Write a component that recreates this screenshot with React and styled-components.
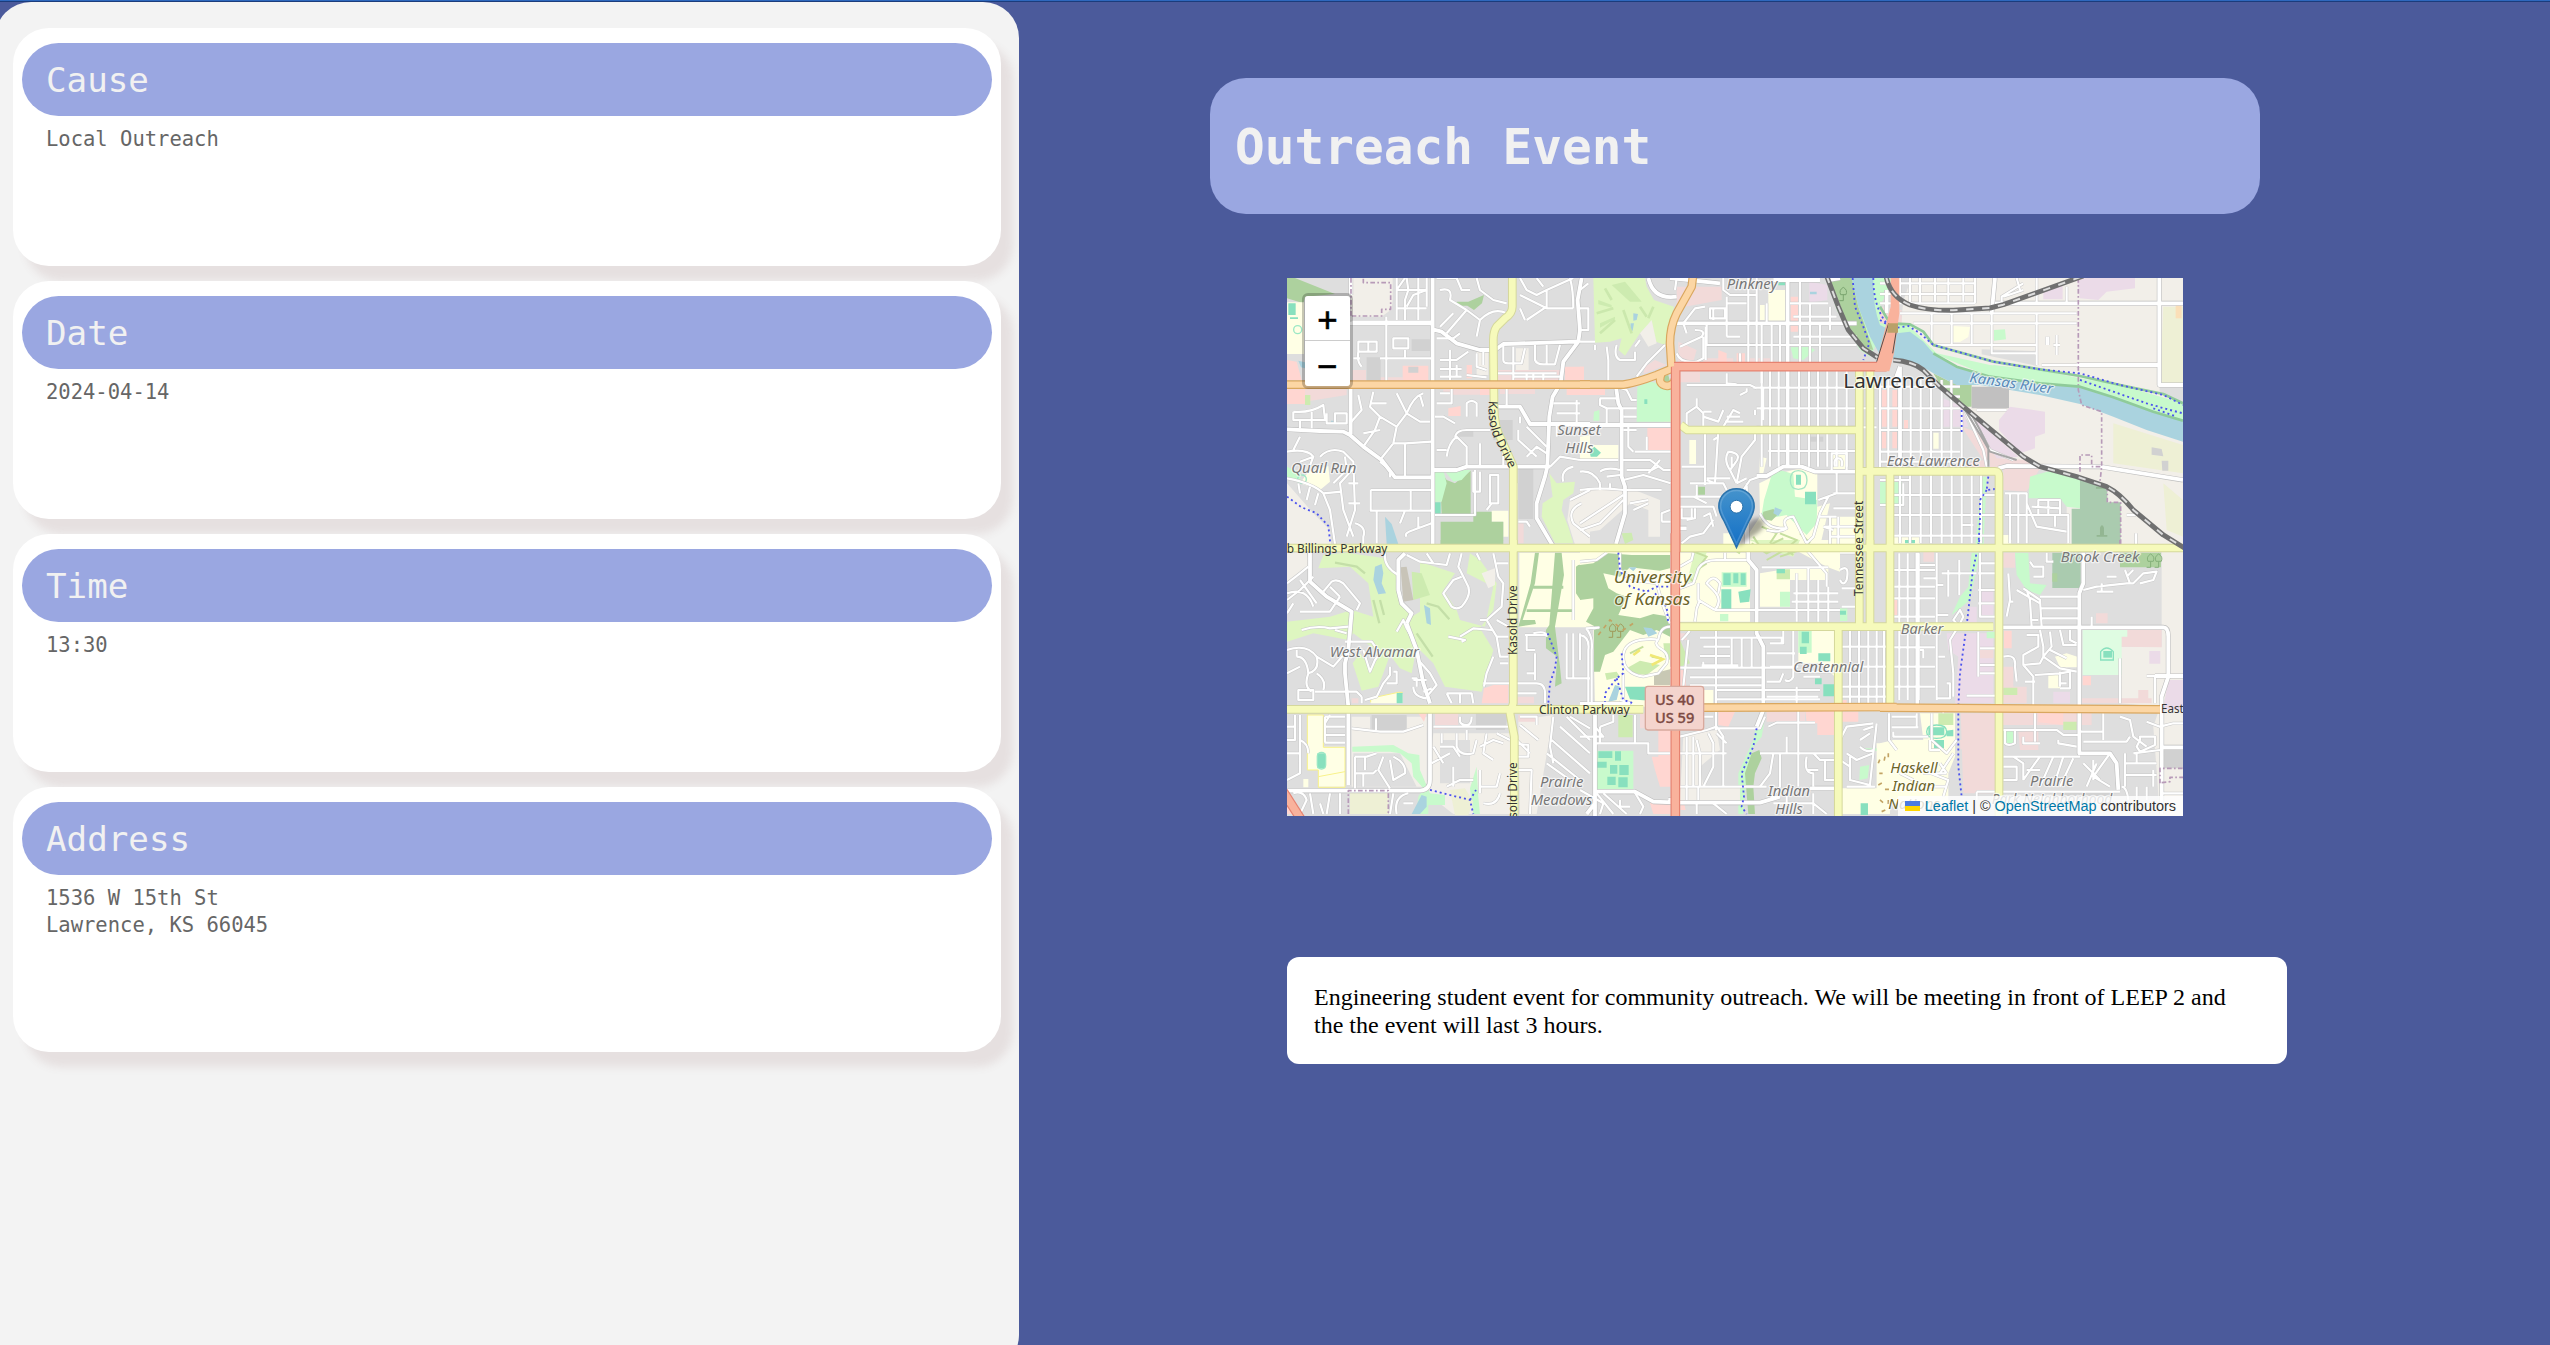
import React from "react";
import styled, { createGlobalStyle } from "styled-components";

const Global = createGlobalStyle`
  * { box-sizing: border-box; }
  body { margin: 0; background: #4b5a9b; overflow: hidden; }
`;

const mono = `"DejaVu Sans Mono", "Liberation Mono", monospace`;

const Page = styled.div`
  height: 1345px;
  overflow: hidden;
  background: #4b5a9b;
`;
const TopBar = styled.div`
  height: 2px;
  background: #2e68bd;
  border-bottom: 1px solid #1b3c7c;
`;
const Columns = styled.div`
  display: flex;
  align-items: flex-start;
`;
const Sidebar = styled.aside`
  width: 1024px;
  height: 1369px;
  margin-left: -5px;
  padding: 26px 18px;
  border-radius: 36px;
  background: #f3f3f3;
  overflow: hidden;
  flex: none;
  display: flex;
  flex-direction: column;
  gap: 15px;
`;
const Card = styled.section`
  height: ${(p) => (p.$lines > 1 ? 265 : 238)}px;
  padding: 15px 9px;
  border-radius: 36px;
  background: #fff;
  box-shadow: 12px 15px 9px #e6e0e0;
  flex: none;
`;
const CardTitle = styled.h2`
  margin: 0;
  height: 73px;
  padding-left: 24px;
  border-radius: 36.5px;
  background: #9aa7e1;
  color: #f1f1f1;
  font: 400 34.2px/74px ${mono};
`;
const CardBody = styled.div`
  padding: 10px 24px 0;
  color: #666;
  font: 20.5px/27px ${mono};
`;
const Main = styled.main`
  flex: 1;
  padding: 76px 0 0 191px;
  display: flex;
  flex-direction: column;
  align-items: flex-start;
`;
const Heading = styled.h1`
  margin: 0 0 64px;
  width: 1050px;
  height: 136px;
  padding: 0 25px;
  border-radius: 36px;
  background: #9aa7e1;
  color: #f1f1f1;
  font: 700 49.4px/138px ${mono};
`;
const MapFrame = styled.div`
  position: relative;
  width: 896px;
  height: 538px;
  margin-left: 77px;
  overflow: hidden;
  background: #dedede;
  > svg { display: block; }
`;
const ZoomControl = styled.div`
  position: absolute;
  top: 15px;
  left: 15px;
  border: 3px solid rgba(0, 0, 0, 0.22);
  border-radius: 6px;
  background-clip: padding-box;
`;
const ZoomButton = styled.button`
  display: block;
  width: 45px;
  height: 45px;
  padding: 4px 0 0;
  border: 0;
  border-bottom: ${(p) => (p.$first ? "1px solid #ccc" : "0")};
  border-radius: ${(p) => (p.$first ? "3px 3px 0 0" : "0 0 3px 3px")};
  background: #fff;
  color: #000;
  font: 400 33px/40px "DejaVu Sans Mono", monospace;
  -webkit-text-stroke: 0.5px #000;
`;
const Attribution = styled.div`
  position: absolute;
  right: 0;
  bottom: 0;
  height: 20px;
  padding: 0 7px;
  display: flex;
  align-items: center;
  white-space: pre;
  background: rgba(255, 255, 255, 0.8);
  color: #333;
  font: 14.45px/20px "Liberation Sans", Arial, sans-serif;
`;
const MapLink = styled.span`
  color: #0078a8;
`;
const Flag = styled.span`
  width: 15px;
  height: 10px;
  margin-right: 5px;
  background: linear-gradient(#4c7be1 50%, #ffd500 50%);
`;
const Description = styled.p`
  width: 1000px;
  height: 107px;
  margin: 141px 0 0 77px;
  padding: 26px 27px;
  border-radius: 12px;
  background: #fff;
  color: #000;
  font: 24.03px/28px "Liberation Serif", "Times New Roman", serif;
`;

/* The map is divided in six tiles, each drawn in thirds of a pixel. */
const ORIGIN = { A: [-7, -8], B: [293, -8], C: [593, -8], D: [-7, 262], E: [293, 262], F: [593, 262] };
const V = (xs, a, b) => xs.map((x) => `M${x} ${a}V${b}`).join("");
const H = (ys, a, b) => ys.map((y) => `M${a} ${y}H${b}`).join("");
const box = (x, y, w, h) => `M${x} ${y}h${w}v${h}h${-w}z`;

const C = {
  park: "#c8facc", wood: "#add19e", golf: "#def6c0", school: "#ffffe5", pitch: "#88e0be",
  retail: "#ffd6d1", shop: "#f2dad9", ind: "#ebdbe8", bare: "#f2efe9", water: "#aad3df",
  dark: "#d1d1d1", grass: "#cdebb0", farm: "#eef0d5", cem: "#aacbaf", grey: "#dedede", mint: "#dffce2",
};

const LAND = [
  ["C", C.bare, "M95 24H909V840H340L360 600L350 590L230 400L160 320L60 200L70 90Z"],
  ["C", C.grey, "M0 24H90L60 130L0 110ZM0 600H560V840H0ZM305 238l165 5v45h-165zM839 345h70v55l-70-30z"],
  ["F", C.bare, "M845 24H909V840H840L830 690L820 560L840 500L720 490V320H845Z"],
  ["F", C.grey, "M360 40H520V260H360Z"],
  ["A", C.wood, "M21 24H45L165 72L75 80L70 100L21 85Z"],
  ["A", C.school, "M21 97H72V252H21ZM85 605L145 588L150 635L120 660L60 640ZM635 722H685V800H670V755H635Z"],
  ["A", C.pitch, box(25, 100, 22, 35) + box(465, 697, 17, 34) + box(30, 142, 24, 5)],
  ["A", C.bare, "M213 24H338V90L335 118L305 140H213ZM590 240h35v75h-35zM708 235h38v65h-38zM21 640L100 730L150 780L155 840H21ZM870 690L930 665V840H890L862 750Z"],
  ["A", C.retail, "M21 270L50 275L65 330H21ZM368 287H445V332H368ZM21 358H75V402H21ZM855 290H912V330H855ZM560 285h16v40h-16zM860 355h65v20h-65zM505 415l37-7v30h-37zM600 355h50v20h-50z"],
  ["A", C.shop, "M75 358H200V375L75 395ZM218 300h40v32h-40zM300 322h70v12h-70zM650 300h200v34h-200zM490 358h110v16h-110zM660 358h105v14h-105zM715 760h16v60h-16z"],
  ["A", C.dark, box(395, 208, 55, 35) + box(260, 262, 42, 72) + box(640, 450, 58, 60) + box(715, 597, 45, 150) + box(385, 290, 30, 18) + box(530, 480, 50, 20)],
  ["A", C.wood, "M530 95H565L612 75L606 100L582 120L562 107H530ZM482 755H580V725H635V755H670V822H482ZM480 600L500 630L525 640L572 602V732H485Z"],
  ["A", C.park, "M464 600H490L500 640L485 695H464ZM492 600H572L545 630L520 635ZM21 590L62 610L60 640L21 625Z"],
  ["A", C.water, "M315 740L335 762L355 822H320ZM55 272l20 5v18l-12-3zM153 452h12v12h-12z"],
  ["A", C.golf, "M808 610L830 640L885 635L880 670L850 690L845 720L865 770L880 820H825L785 740L788 700L818 680Z"],
  ["A", C.school, "M900 500L930 495V570H900Z"],
  ["A", C.grass, box(75, 375, 16, 30)],

  ["B", C.golf, "M40 24H195L200 50L222 90L282 110L255 225L228 215L215 155L180 190L135 257L116 240L125 205L90 215L45 218Z"],
  ["B", C.grass, "M95 45L135 35L185 95L150 95ZM55 90l40 15v8l-40-10zM60 160l45-20v8l-45 25z"],
  ["B", C.bare, "M180 190L215 150L230 220L205 230ZM0 655H150L240 690V800H205V720L150 700L60 780L0 790Z"],
  ["B", C.shop, "M290 50H425V90L290 115ZM295 215L350 240L340 275H295ZM195 290L225 270L260 285L190 312ZM370 265h90v35h-90zM500 265h80v35h-80zM300 305h60v32h-60z"],
  ["B", C.retail, "M202 474H272V542H202ZM252 425h20v30h-20zM415 240l25 10v45h-60v-20h35zM470 250h25v40h-25zM632 80h22v105h-22zM0 290H12V345H0ZM0 355h75v20H0z"],
  ["B", C.park, "M172 350L210 335L272 345V455H170ZM632 232L690 230L705 240L670 270L640 265ZM42 425l16-5v32h-18z"],
  ["B", C.school, "M565 60H620V152H565ZM540 105h14v45h-14zM0 525h115v42H0zM328 510h20v72h-20zM540 560l20 5-10 45h-12zM752 550h50v48h-50z"],
  ["B", C.school, "M538 640L600 610L660 595L712 610V790L680 840H500V800L540 740ZM430 790h40v40h-40zM712 710l38-10-30 130h-40zM750 740h80v90h-80z"],
  ["B", C.ind, "M688 35L742 45V90L688 98Z"],
  ["B", C.park, "M575 615L600 600L640 612L645 680L712 690L710 760L680 795L645 760L620 735L570 745L545 735L552 690Z"],
  ["B", C.pitch, "M648 614h15v30h-15zM675 665h33v38h-33zM595 24h22v22h-22zM28 540l15-10 20 18-12 12H32zM193 388h9v14h-9z"],
  ["B", C.wood, "M550 725l30-8 15 15-20 20-30-5zM345 650h30v24h-30zM245 320l20-5 5 20h-20z"],
  ["B", C.water, "M585 712l22 8-12 18-15-8zM690 65h20v8h-20zM160 130l14 2-4 18-10 2zM152 160l10 0-4 22h-8z"],
  ["B", C.dark, box(690, 500, 40, 15)],
  ["B", C.grass, "M125 790L155 788L160 810L135 822Z"],

  ["C", C.park, "M-160 24H40L0 110L30 160L90 165L160 230L340 275L480 300L600 325L720 345L909 400V460L700 385L480 340L330 320L160 250L60 190L20 165L-30 260L-60 240L-130 120Z"],
  ["C", C.wood, "M-155 24H-85L-65 110L-20 240L-60 232L-100 180ZM160 310L220 340L275 345V410H245L190 360Z"],
  ["C", C.bare, "M90 170L130 180L160 222L340 260L480 290L480 300L330 285L170 250Z"],
  ["C", C.water, "M-85 24H-20Q-22 110 0 165L50 190L90 185L130 215L160 250L230 290L330 320L480 340L600 350L700 382L820 425L909 452V515L800 480L700 440L600 402L480 375L390 360L300 345H230L160 310L110 280L45 265L0 255L-30 200L-65 110Z"],
  ["C", "#c1c0c0", "M275 350H387V415H275Z"],
  ["C", C.ind, "M390 410L495 425V490L465 500V535L420 550L357 480V450ZM590 24H765V55L680 65L655 90L600 85ZM490 60L548 40V88H490ZM190 385L245 410L265 470H190ZM265 430l70 60 80 70-90 10z"],
  ["C", C.shop, "M245 470L300 490L350 565L440 570L480 595L440 665L370 660V600H265V580L310 570ZM0 110L65 120V160H0Z"],
  ["C", C.retail, box(5, 360, 16, 110) + box(37, 360, 16, 110) + box(5, 485, 14, 50) + box(37, 485, 14, 50) + box(72, 450, 12, 30)],
  ["C", C.park, "M450 620L520 600L600 630V715L560 710L540 685L445 685ZM342 180L375 178L378 208L342 212ZM0 636H65V705H0ZM305 620l15 0-10 220h-25zM340 285l130 15 125 30-10 20-115-20-130-20z"],
  ["C", C.cem, "M600 628L682 650V697H722V822H575V716H600Z"],
  ["C", C.farm, "M700 460L909 525V610L700 580ZM850 110H909V345H840ZM850 640L909 690V800L860 780Z"],
  ["C", "#fbdfb8", box(887, 105, 18, 40)],
  ["C", C.school, "M220 168l50 3-5 30-25 15h-20zM160 488h16v48h-16zM368 795h25v28h-25zM40 800h80v22H40z"],
  ["C", C.dark, "M815 532l30 5 5 22-35-5zM845 572l20 0v30h-18z"],

  ["D", C.golf, "M130 45L200 38L315 55L350 110L365 190L395 230L420 215V65L525 100L490 150L530 210L540 240L615 260L640 140L560 100L570 40L600 60L650 130L640 210L600 265L640 330L605 455L495 440L460 370L410 320L395 400L360 385L330 345L295 440L245 452L218 370L240 340L275 390L300 340L220 280L205 300L100 280L21 305V245L150 230L215 210L280 230L265 130L210 80L115 85Z"],
  ["D", C.grass, "M395 95L425 100L450 165L400 180Z"],
  ["D", "#c8c4b8", "M362 82L380 80L400 180L370 185Z"],
  ["D", C.water, "M285 80L305 72L310 100L305 130L318 160L295 163L280 120ZM432 195L450 205L453 255L440 250Z"],
  ["D", C.bare, "M21 38H80L90 80L40 120L21 125ZM605 100l40-15v50l-20 10zM215 530H440V740H215ZM460 580H690V822H520L440 760ZM715 540L820 525L770 822H720Z"],
  ["D", C.grey, box(270, 525, 110, 45) + "M220 640H360L410 740H220ZM560 520H685V570H560ZM480 600h90v130h-90z"],
  ["D", C.dark, "M275 525h105v45H275zM588 520h97l-10 50h-87z"],
  ["D", C.school, "M272 475L355 457L368 462V490H272ZM82 525H130V620H195V740H115V690H82ZM718 38H930V262H718ZM70 717h15v25H70z"],
  ["D", C.wood, "M765 38H777L765 130L728 240L765 240L768 252L715 260L752 130ZM825 38H845L852 105L825 260L840 380L845 430L825 440L832 350L798 325L798 270L808 255ZM895 75L930 70V182L900 178L888 160V80ZM760 137h90v9h-90zM740 208h140v8h-140zM482 0h190l-60 12H482z"],
  ["D", C.retail, "M605 490L612 445L650 432L685 430V490ZM415 520h25l-8 25zM21 780L55 822H21Z"],
  ["D", C.shop, "M465 520H535V562L465 568ZM715 525h58l-5 20-53 0zM215 475h20v15h-20zM712 470h50v20h-50z"],
  ["D", C.park, "M217 620L340 615L385 640L418 645L420 690L450 760L495 765V795H445V822H410L415 770L430 745L400 710L395 670L360 640L330 635H217ZM590 680L570 745L580 822H600L595 770Z"],
  ["D", C.water, "M425 765L440 770L440 800L420 822H395Z"],
  ["D", C.pitch, "M350 458h18v32h-18zM112 640h24v45h-24z"],
  ["D", C.farm, "M210 755H325V822H210ZM510 750l45-5 25 40-15 40h-40z"],

  ["E", C.school, "M0 30H270V500H45L40 260H0ZM300 38H510V245H300ZM540 100L630 85H745V120H630V200H540ZM655 265H765V410L720 370H655ZM635 24L500 0H780V95L740 80ZM890 610H930V822H785V745H890ZM370 450h30v40h-30z"],
  ["E", C.wood, "M0 75L40 70L85 40L155 45H270V85L240 92L150 82L120 110L70 100L85 145L110 160L140 170L115 225L180 235L220 222L270 230V290L230 270L190 285L150 270L100 335L75 345L60 395H42V258L18 245L40 205V175L0 180Z"],
  ["E", C.grass, "M115 525H158V592H115ZM140 385L180 362L240 375L200 405L160 400ZM250 310H270V360L255 350ZM300 300L330 370L300 380ZM590 88h40v30h-40zM75 400l35-5 10 15-40 10z"],
  ["E", C.golf, "M345 30L385 24L350 120L320 130ZM510 0h150l-20 50-60-15z"],
  ["E", C.park, "M425 97H500V140H425ZM420 222h25v22h-25zM655 268h40v70h-40zM48 632H160V748H45ZM555 535L545 590L520 620L500 700L490 822H475V700L520 600L530 545ZM780 205h22v38h-22zM840 680l28-5-5 40-25 5zM855 625h35v8h-35zM600 155h30v45h-30z"],
  ["E", C.pitch, "M424 148h30v60h-30zM475 155L512 148L508 185L480 188ZM135 440H210V482L150 478ZM665 275h22v35h-22zM660 320h20v22h-20zM715 340h36v24h-36zM730 433h33v36h-33zM705 415h20v18h-20zM55 634h42v20H55zM105 634h18v28h-18zM50 665h30v18H50zM90 675h22v26H90zM118 675h28v30h-28zM82 710h25v25H82zM115 712h28v30h-28zM780 212h18v12h-18zM842 790h22v35h-22zM430 100h22v35h-22zM460 100h15v30h-15zM482 100h15v35h-15zM590 85h25v15h-25z"],
  ["E", C.water, "M190 262L215 265L232 280L205 290ZM105 435L120 440L110 480L85 485ZM145 82l25 0-10 12z"],
  ["E", "#c8c8b4", "M222 400L270 388V435H222Z"],
  ["E", C.wood, "M538 630L545 655L525 700L520 740L525 822H505L495 700L515 640Z"],
  ["E", C.retail, "M235 570L272 520V740H240L225 690L215 650L235 650ZM415 515h50l-20 45-30-5zM675 500H765V585H712V550H680ZM780 500h20v-20h-20zM785 515h50v30h-50zM210 790L270 780V822H220ZM302 390h16v50h-16zM302 740v70h15z"],
  ["E", C.shop, "M180 520h90v45h-90zM300 280h20v20h-20zM560 515h115v30H560z"],
  ["E", C.bare, "M310 585L410 570L420 630L360 680L370 740H480V780H300Z"],

  ["F", C.ind, "M200 280H340V490H225L235 350L205 330ZM300 150h40v75h-40zM520 455h50v35h-50zM808 333h33v38h-33zM865 420h44v90h-60zM270 200l20 0v60h-30z"],
  ["F", C.shop, "M242 520H350V760H250ZM370 380H400V440H440V490H365ZM722 265H845V322L722 320ZM605 475h210v15H605zM130 35h32v30h-32zM370 38h35v45h-35zM300 330h40v25h-40zM415 575l60-5v60h-55zM775 450h30v35h-30zM365 515h270v40H365zM648 220h35v30h-35z"],
  ["F", C.retail, "M372 272H395V325H372ZM475 517h75v38l-75-8zM608 408h25v28h-25zM40 170h12v65H40z"],
  ["F", C.park, "M275 38H300L270 180L215 225L240 170L265 140ZM405 38H445L450 130L500 135L480 165L440 150L410 105ZM320 275h25v20h-25zM370 570h30v40h-30z"],
  ["F", C.cem, box(517, 38, 85, 106)],
  ["F", C.wood, "M720 38H843V82H720ZM517 100l15 0v25h-15z"],
  ["F", C.mint, "M608 270H742V290H725V405H608Z"],
  ["F", C.pitch, "M670 333h26v20h-26z"],
  ["F", C.school, "M120 520H225V650L205 700V790H0V610L40 600H130ZM525 350L560 340L592 350V382H540ZM505 405h35v40h-35zM370 0h25v10h-25z"],
  ["F", C.pitch, "M145 562h48v24h-48zM198 572l22-3v20h-20zM162 600h30v25h-30zM75 0h30v10H75z"],
  ["F", C.grass, "M175 520h45v35h-45zM370 443h42v22h-42zM550 545h40v25h-40z"],
  ["F", C.dark, "M848 630h61v55h-61zM540 760h150v20H540z"],
  ["F", C.shop, "M240 600l38 0-15 28h-22z"],
];

const MINOR = [
  ["A", H([60, 115], 350, 440) + "M350 24V150M380 24L385 60L375 90V150M415 24V150M440 24V110M215 155H455M319 140V350M375 24L350 60M440 60L400 75L380 110M470 24H530L545 60H570M590 24L600 60L640 90L680 100M480 60Q520 50 510 90L560 120L600 150L590 200M520 130L480 170M560 120L500 190M600 150Q640 110 680 130M720 24L740 60L770 75L800 60L880 24M720 75L800 115H880M800 60V115M770 24L790 50M740 150L800 110M720 115L735 150M880 115Q880 60 870 24"],
  ["A", "M235 215H290V245H235ZM340 205H385V235H340ZM235 245Q230 275 245 290M220 265H240M300 265H455M375 265V240M265 245V215M470 205H520L540 190M510 240V330M480 270H530L565 245M480 297H545M480 320H545M530 285V320M610 240V285M590 250V290L620 300M670 225V270Q670 280 685 280H725L735 235M765 225V270Q770 283 790 283H825L840 225M800 225V283M700 230V330M650 310H830M700 320H840M760 310V332M790 310V332M560 315L620 322M740 310V332"],
  ["A", "M40 425Q90 430 130 405L135 450H40V425M95 425V475M60 450V475M140 430V460H200V430H165V460M235 375L245 420L210 460M280 365L270 410L300 440L285 480L250 530M320 400H270M350 370L380 430L350 470L340 520L300 570M380 430Q400 380 430 370M380 430L420 455H450M300 440L350 470M340 520H375V620M250 490L300 480M375 520L455 515M420 375L430 410M21 545Q80 535 100 560L85 600M40 540L60 500M60 575L100 560M21 625Q100 640 130 670L150 720L165 822M55 640L60 670M90 650L80 690M115 670L105 705M130 670L185 665M160 640L200 600L195 560M120 560Q150 530 190 545L220 575L225 720L200 800M225 590L180 640L190 720L220 800M205 640H235M205 700H240M225 760Q260 770 250 800V822M272 660H455M272 660V722H455M330 622V600L300 575M392 660V722M290 722V820M375 722L360 760M380 800Q370 790 400 780L455 760M415 740V775"],
  ["A", "M470 400H515V350M465 440H490L525 460M480 370H510M560 440V400Q575 385 590 400V440M525 500Q530 480 560 480H630M500 560Q505 520 530 500L560 530V590M600 520V590M470 540H500M670 520V590M715 480V510L770 560M740 560L770 530L800 550M740 470L800 530M680 345V410M720 440V460M580 605V665H600V605M630 615H655V700H630ZM620 720L635 700M690 640H710V690M715 755H740L750 770M820 400H900M830 430H900M830 460V500M890 390V460M880 590Q840 600 850 635M810 590L840 560L900 570M905 700Q860 720 880 760L930 800M870 690L930 660M465 735H585V600"],
  ["B", "M0 115H25V180H0M0 60L25 40M0 215H45M80 230L85 270V345M45 225V240M110 225Q100 260 120 270H165V245M180 210L165 230M170 320L200 280L255 225M110 350L140 360L155 390H170M60 385H115M60 385V405L80 415H170M80 415V465M130 440H170M130 480H170M145 465V530L160 545M165 545H272M125 570H210L250 600H272M140 600H215L235 590M130 630L190 615L272 640M205 610L240 570M0 570H115M0 605Q40 600 60 640M60 605Q80 590 120 600M0 660Q60 650 130 660H245M150 700L205 690M0 760L130 675M0 780L60 760L130 690M60 640V660M80 620L120 615M90 655V640"],
  ["B", V([505, 530], 24, 280) + V([440], 80, 200) + V([377], 170, 270) + "M290 24L285 60M285 160H320M320 190L310 160L345 115L375 110M345 180Q380 180 365 200L300 230M390 145V115H435V145ZM400 115V150M430 24V60L450 75H530M440 100H500M630 100H745M290 250Q300 280 350 275L370 265V200M480 250V295M560 100V160M660 24V290M690 100V290M720 160V290M750 110V180M770 140H640M640 200H830M440 200H480M380 160V225H530M600 160V290M575 160V290M545 160V340"],
  ["B", H([225], 380, 830) + H([353], 520, 890) + H([415, 472], 530, 890) + H([543], 565, 830) + V([545, 570, 596, 657, 687, 714, 742, 770, 800], 300, 590) + "M550 355V450M320 345H510L530 355M320 470V430L350 410L370 430V470M350 385V410M370 440L415 455L430 420M370 425H395M430 470L460 420L480 430M435 455H490M440 440H480M440 310V340L470 343M500 355V365L480 375M525 435V420"],
  ["B", "M305 590H375V480H330M375 590V645M380 630L405 640L415 480M400 510L415 500M300 680H430M380 625H450M350 645V680M330 640H430L440 660M445 545Q430 570 450 600L470 640M445 545Q490 550 465 580L450 600M470 640L500 625M470 640L485 560L525 510V475M490 660L510 630L540 620M500 640L505 840M300 710H400L410 740M305 715V745H335V715M345 715V745L320 750M305 820L330 800L370 790L400 750M370 740L390 730L400 770M340 680L380 700M540 730Q560 780 620 775Q600 745 640 740L680 820M620 775Q600 790 560 780M680 820L700 800L720 730L745 680M715 690L770 670V600M720 740H770M730 770L760 780M750 740V830M775 740V830M760 670H830M760 715H830M750 800H830M735 770H830M755 600V550H800V600M765 590Q760 565 775 565Q790 565 785 590M245 755V730L270 720M245 755H272M205 700L160 720M200 500V540M455 590V560"],
  ["C", H([40, 72, 100], 0, 285) + V([60, 90], 24, 100) + "M120 24V100M165 24V95M205 24V100M250 24V95M285 24V100M60 130H590M100 160H590M160 225H470M335 130V250H470M155 130V225M215 130V225M275 130V225M470 24V100M560 50V100M365 100V80L430 40M430 60L370 80M505 225V200M530 195V255M520 225H540M410 24L420 60M470 130V285"],
  ["C", V([0, 25, 60, 92, 122, 153, 185, 214], 330, 600) + H([350, 415, 480, 545, 575], 0, 240) + "M245 420V600M290 420H380M325 570V600M250 410L310 540L320 590M270 430L330 540L400 570M240 380H215M500 225V200M485 285H839"],
  ["C", V([60, 90, 122, 153, 185, 215, 245, 275, 303], 615, 820) + H([675, 735, 797], 40, 345) + "M0 630H90V600M0 705H70V640M90 630H40M375 670H440V820M375 735H565V820M390 670V820M415 670V820M440 670V700L470 770L560 785M475 735V690H540V735M505 690V735M455 710L540 715M525 735V770M245 765H280M768 822V790M768 735H740"],
  ["D", "M21 160Q80 140 100 200M21 180L60 150L100 110M21 130L60 100L85 80M60 215H150L180 170M130 155L155 125Q170 115 190 130L240 190L230 210M40 190L21 220M60 120L110 190M150 140L180 170M315 40Q310 80 355 105M380 45L420 65L500 75L510 40M440 40L460 70M545 40L535 80L560 130Q580 160 545 200Q530 210 515 200L490 160L520 120L545 110M590 40L600 60M650 70H685M640 40L655 110L670 130L665 200L620 240L650 290L660 350L685 350M505 290L555 300L545 305M540 290L580 265L635 270M620 240H600M650 240L685 260M650 290H685M640 350L620 400L612 440M660 370H685M350 275L370 240L380 265L400 300L415 360L450 400L470 435L440 470M410 440V415H395M440 420H400M400 440Q400 470 440 475M430 455L455 445"],
  ["D", "M65 270Q110 255 150 265L205 260M165 270L200 280M195 305H275L300 340L285 360L270 395L250 330M330 380V405L310 430L290 470L255 480M340 395H350V430H320M21 330Q80 310 110 350Q120 390 85 400Q70 440 95 455M50 350Q80 350 85 400M21 400L60 380M50 330V350M110 350L160 380L195 340M110 400Q140 420 130 450M55 450H100V480H55ZM105 455H230L245 470M245 470V490M500 460H575L580 490M500 460L515 490M540 460V490M610 430H770Q795 430 795 460V490M735 285H800M740 285V330H765M760 280Q800 270 800 290M765 340V400H740M765 420V345M700 460H770M860 280V415H930M880 60V240M880 280V415M900 280V360"],
  ["D", H([530, 560, 585, 608], 135, 195) + "M135 530V608M150 525L135 550M215 565L300 575H370L430 555M288 535V570M540 530V545Q545 555 560 555T575 530M460 560H685M480 620H520L540 650M485 580V610M530 580V620Q540 650 580 640L590 600M560 570V600M620 580L610 640L640 660M600 620L640 600L670 610M650 580L690 600M455 670L510 640M460 620L490 670M500 740L540 720H580M520 740V680M600 740L650 740L660 700M610 790Q650 800 660 760M600 690V760M225 650H260L290 640M225 700H280L290 690M225 650V745M255 650V690M310 650L295 690L330 745M340 650Q380 670 375 700L340 720L330 660M250 700V740M45 525V600L21 600M60 525V700L21 720M60 600Q85 610 85 640M21 560H45M40 760Q70 750 80 780L60 822M21 640H60M90 760L100 822M150 760L140 822M180 760V822M120 790L130 822"],
  ["D", "M700 590L750 640M720 555L775 600M700 610L745 615V650H710ZM705 690H755L750 822M720 530H770V555M820 530L810 620L820 670M860 530L930 600M840 560L930 640M815 600L930 700M800 640L900 720M800 670L870 720M870 530L930 565M340 760L330 822M385 760Q340 770 350 822M370 790H400"],
  ["E", "M0 65L50 60L80 38M120 38L120 90L160 120L230 130L250 200L270 250M300 80L335 60L340 38M300 145L340 130L355 85Q370 60 410 60H500M435 38V60M415 160L420 130Q400 100 380 130L400 150Q430 180 405 210M355 130V180L405 210M405 210H780M345 245L350 205L360 180M545 82H745M675 24L740 100V140M685 85V245M715 120V245M650 100V245M745 140V245M640 160H775M635 185H775M780 90Q810 70 800 120Q790 140 780 120M780 38H830M770 24H840"],
  ["E", "M18 265Q40 290 35 330V490M40 265Q80 260 18 265M0 285Q30 290 25 330V490M235 300Q240 260 270 260M235 300Q220 310 240 325Q270 340 260 370L235 400L190 410Q130 400 130 350Q130 310 180 300Q220 295 235 300M130 400V480M155 490L120 480M305 300Q325 280 330 270M310 440L325 300M360 293H600M370 320H450M360 348H450M365 376H475M455 293V380M485 293V380M515 293V380M370 376V365M545 293H605V310M610 265V310H570M640 265V410Q630 430 615 420M270 383H640M330 412H545M330 436H545M408 260V570M408 450H720M408 478H720M560 470H715M560 425H600L610 400M560 340H645M570 380H655M655 395H765"],
  ["E", V([810, 837, 865, 890, 912], 265, 500) + H([320, 380, 440, 470], 785, 930) + H([145, 200], 785, 830) + "M670 410H720M650 440V490M45 530V740M45 560L70 590H0M100 525V545L60 560M60 560V610M165 525V610M95 610H205V640H270M45 610H95M305 530H400M300 590L380 570L410 560M410 560L430 590V740M320 590V780M340 590V740M385 580L400 610V680L370 740M350 600L360 640V740M410 580L440 610M300 740H560M300 640H440M355 740V780M410 565L540 565L555 530"],
  ["E", "M540 640H770M565 560L590 548H705M580 640L570 700L540 740M600 640V740L570 780M620 590V640M655 500V740M680 650Q670 700 700 700V740M700 640L720 660H765M735 660V720H765M680 690H715M780 600L800 560L880 550M800 640L830 660L880 640L890 550M810 650V720L870 735L880 640M780 660L810 680M840 600L870 580M850 570L880 560M840 620Q860 640 880 630M800 740H885M620 740V790M580 790H700L740 822M700 760V822M400 790L440 822M350 790V822M120 780V800H150M160 750L190 800L180 822M0 750L70 790L60 822M50 760L100 822M70 760L140 822"],
  ["F", V([58, 83, 116], 40, 480) + H([90, 140, 175, 230, 322, 380, 440], 40, 165) + "M170 38V260M205 90V170M238 60V165M120 75H165M130 115H170M185 100H290M170 135H190M300 38V70H345M295 100H345M295 150H345M295 190H345M300 60V230H345M170 225H205M240 260L220 240L240 210L250 230L235 260L210 300L220 400V470M170 280V480M175 350H195M170 475H210V430H200M120 330H130V355M295 275V410M300 325H345M300 375H345M300 400H345M260 467H345M190 500V520"],
  ["F", "M385 100L390 180L380 230M390 185H400M430 145L480 180L485 260M440 150L450 180L455 260M480 170H600M480 205H600M480 235H600M455 240H475M450 65L460 80H490V110H460M410 150L480 190M500 38V65H520M610 150L650 140L740 130L760 130L790 100L830 95L820 120L780 130M650 155H700M735 90L750 130M665 130V155M680 110H710M740 110L760 90M635 230V260M480 270L490 320V350L540 385L590 395M510 275L515 320L490 350M440 285H475V320L430 345L430 375L480 370L490 350M510 330L560 355M540 270L550 315H590M570 270V300L590 310M370 350Q410 340 405 380L410 425M430 375L460 410V500M465 405L540 400L570 395V445H540M435 425H465M720 355V490M825 410V490M800 408H909M560 430H540M540 395V440"],
  ["F", "M27 520V600L50 630M35 530H110M35 562H115M40 575V590H145M155 520V600L200 640L230 600M110 520V560M370 570H530L550 585H600M375 570V610Q385 620 405 610V570M430 590V610H480M465 520V605M535 600V610L590 620M600 575H670V600M670 520V600M610 605H740L750 590M720 530L750 540L760 590L800 620M780 600V590H825V615L780 635L770 620ZM800 545L840 560L880 550H909M760 640L840 630M370 650H600M370 680H410V720H370M400 650L430 670V720M480 650Q450 690 430 720M520 650L480 740M550 650L520 740M580 655L540 740M440 690L480 690M610 670L660 720M650 670L620 740M690 640L640 710L690 740M640 660V720M735 670H830M735 705H830M770 640V670M735 640V740M820 690V740M290 755H720M290 755V780M725 740Q740 740 745 780M770 740V780M800 740V780M840 760H909M180 700L220 640M150 600V630H180M130 700H200M60 700L100 720M100 680L205 720L190 770M130 740H200M180 670L200 700"],
];

const MEDIUM = [
  ["A", "M458 24V830M458 178L485 185L530 220L600 240H645L670 222L890 215M905 24L893 90L900 180L895 215L850 275L842 340L818 380L808 440L802 590L795 620L770 700V745L820 830M210 160H455M212 350V492M21 478L120 483L190 485L210 495L250 530L305 570L345 622H455M460 600H530L560 590H810M650 410H720L750 462H930M212 24V75"],
  ["B", "M108 350L115 400L125 420V620L135 650V730L108 822M0 465H272M205 24Q220 90 290 80M270 24L420 40M290 160H830M623 24V590M530 618H560L610 590H665L705 605H830M300 775H320M500 700V830M580 30H720M745 30L780 24"],
  ["C", "M345 24L335 130M345 100H909M838 24V345H909M355 595L380 588L660 590L909 630M40 345L60 290M60 290V600M20 60V130M590 285H838"],
  ["D", "M90 38V125L140 170L215 215L205 330L195 370V400L205 500V735M375 40L355 60V150L365 190L395 220L380 250M380 250L410 330L430 430L450 490M450 500V720Q450 750 420 752H21"],
  ["E", "M290 22H505V60L530 90V280L550 320V510L530 560M0 492H150M45 525V830M45 755H165L220 785L300 788H540L600 770M690 745H785M265 780H300M20 822L45 790"],
  ["F", "M610 38V130L598 160V640H690L710 670L715 750M365 262H850Q865 262 865 290V410L845 470V822M112 38V500M825 408H909M850 622H909"],
];

const YELLOW = [
  ["A", "M697 10V110Q697 130 675 145L650 170Q640 185 640 210L642 390Q640 470 665 510L700 590V845"],
  ["D", "M10 24H1190M700 0V490L690 520L703 590V840M10 508H1090"],
  ["B", "M302 465L322 480H840M838 300V840M870 300V840"],
  ["E", "M838 0V250M870 0V250M300 260H1240M775 260V840"],
  ["C", "M-60 604H345Q357 604 357 620V840M30 604V840"],
  ["F", "M-610 24H909M357 24V840M30 24V500"],
];
const ORANGE = [
  ["A", "M10 344H930"],
  ["B", "M0 344H130Q170 338 230 315L285 292M340 10L335 50L290 130Q270 170 270 220L275 300M245 310Q230 345 262 348Q285 345 285 325"],
  ["E", "M370 503L950 501"],
  ["F", "M0 503L840 508"],
];
const RED = [["B", "M282 290H920M287 290V845"], ["E", "M286 -20V845"], ["D", "M10 755L80 865"]];
const DOTS = [
  ["A", "M21 680L65 712L110 730L145 768L153 840"],
  ["B", "M818 24L825 110L850 170L868 220L850 270M880 24Q880 110 920 160"],
  ["C", "M0 150L40 175L85 168L120 190L160 225L340 275L480 298L600 310L720 345L850 375L909 405M600 330L700 365L800 400L870 420L909 430M820 415L890 440M245 420V490M325 620L320 660L365 655M320 660L300 690V750L295 830"],
  ["D", "M803 280L830 350L825 385L810 430L805 490M450 750L570 780L580 822M570 780L588 750"],
  ["E", "M115 38L120 90L150 140L200 155L230 140L290 140M225 160L260 200L265 250M125 340L130 400L110 415L75 460V485M110 415L130 480L160 490M530 565L520 620L485 700L492 770L485 800L500 822"],
  ["F", "M298 0L278 95L262 240L240 400L235 500V680L245 770"],
];
const BORDERS = [
  ["A", "M213 24V140M215 138H305V118H332V38H250V24"],
  ["C", "M595 24V360L605 405L665 425V590L660 635M600 605V555H635V590H665M682 650V697H722V830H909"],
  ["D", "M205 822V752H325V822"],
  ["F", "M720 0V20H909M840 730V685H909M845 728L870 725V712H909"],
];
const RAIL = [
  ["C", "M-160 18L-125 110L-95 180L-50 235L-8 262"],
  ["C", "M18 18Q30 80 90 105Q140 122 220 121L330 114L370 104L610 18"],
  ["C", "M40 270Q100 275 130 300L180 350L250 410L340 485L430 560L480 590L590 620L680 650Q720 670 760 720L850 795L920 838"],
];

const at = (t) => `translate(${ORIGIN[t].join(" ")}) scale(.3333)`;
const Strokes = ({ items, color, w, dash, cap }) => (
  <g fill="none" stroke={color} strokeWidth={w} strokeDasharray={dash} strokeLinejoin="round" strokeLinecap={cap}>
    {items.map(([t, d], i) => <path key={i} transform={at(t)} d={d} />)}
  </g>
);

/* tile, x, y, text, size, rotation, fill, italic, width */
const LABELS = [
  ["B", 440, 56, "Pinkney", 42, 0, "#777", 1, 152],
  ["A", 34, 609, "Quail Run", 42, 0, "#777", 1, 195],
  ["A", 832, 496, "Sunset", 42, 0, "#777", 1, 130],
  ["A", 856, 549, "Hills", 42, 0, "#777", 1, 84],
  ["C", 20, 588, "East Lawrence", 42, 0, "#777", 1, 280],
  ["D", 149, 351, "West Alvamar", 42, 0, "#777", 1, 268],
  ["F", 542, 65, "Brook Creek", 42, 0, "#777", 1, 236],
  ["F", 62, 283, "Barker", 42, 0, "#777", 1, 128],
  ["E", 640, 396, "Centennial", 42, 0, "#777", 1, 210],
  ["D", 780, 742, "Prairie", 42, 0, "#777", 1, 130],
  ["D", 752, 796, "Meadows", 42, 0, "#777", 1, 185],
  ["E", 564, 768, "Indian", 42, 0, "#777", 1, 126],
  ["E", 586, 822, "Hills", 42, 0, "#777", 1, 82],
  ["F", 450, 739, "Prairie", 42, 0, "#777", 1, 130],
  ["F", 335, 793, "Park Neighborhood", 42, 0, "#777", 1, 362],
  ["E", 101, 130, "University", 48, 0, "#6b6428", 1, 232],
  ["E", 103, 194, "of Kansas", 48, 0, "#6b6428", 1, 228],
  ["F", 31, 698, "Haskell", 42, 0, "#6b6428", 1, 142],
  ["F", 37, 752, "Indian", 42, 0, "#6b6428", 1, 128],
  ["F", 25, 806, "Nations", 42, 0, "#6b6428", 1, 155],
  ["B", 790, 353, "Lawrence", 61, 0, "#333", 0, 279],
  ["C", 267, 336, "Kansas River", 42, 8, "#5b8ab8", 1, 252],
  ["D", 20, 40, "b Billings Parkway", 37, 0, "#333", 0, 302],
  ["D", 777, 523, "Clinton Parkway", 37, 0, "#333", 0, 272],
  ["F", 843, 518, "East", 37, 0, "#333", 0, 68],
  ["D", 712, 345, "Kasold Drive", 36, -90, "#333", 0, 209],
  ["D", 712, 876, "Kasold Drive", 36, -90, "#333", 0, 209],
  ["E", 849, 168, "Tennessee Street", 36, -90, "#333", 0, 286],
];

function Trees({ t, x, y, n, color }) {
  return (
    <g transform={at(t)} stroke={color} fill="none" strokeWidth="3">
      {Array.from({ length: n }, (_, i) => (
        <path key={i} d={`M${x + i * 24} ${y}v-18m-8 0q-6-14 8-22q14 8 8 22zm-4 18h12`} />
      ))}
    </g>
  );
}

function StreetMap() {
  return (
    <svg width="896" height="538" viewBox="0 0 896 538">
      <defs>
        <linearGradient id="pin" x1="0" y1="0" x2="0" y2="1">
          <stop offset="0" stopColor="#4593cc" />
          <stop offset="1" stopColor="#126fc6" />
        </linearGradient>
        <filter id="soft" x="-30%" y="-30%" width="160%" height="160%"><feGaussianBlur stdDeviation="2.2" /></filter>
        <path id="kasold" d="M627 392Q620 470 652 524L690 600" />
      </defs>
      <rect width="896" height="538" fill="#dedede" />
      {LAND.map(([t, fill, d], i) => <path key={i} transform={at(t)} fill={fill} d={d} />)}
      <g transform={at("D")} fill="none" stroke="#c4dfa8" strokeWidth="7">
        <path d="M165 68L230 80L255 100M280 180L298 250M300 180L312 225M410 280L458 350M440 190L475 200L508 238" />
      </g>
      <g transform={at("B")} fill="none" stroke="#cbe8ad" strokeWidth="8">
        <path d="M50 130L100 115M60 190L105 150M130 120L155 190M180 110L200 140M220 110L205 145M75 55L95 90" />
        <path d="M655 602q-24 0-24 29q0 27 24 27q26 0 26-27q0-29-26-29z" stroke="#a5e6c4" strokeWidth="4" />
      </g>
      <g transform={at("E")} fill="none" stroke="#c6df9f" strokeWidth="6">
        <path d="M330 30L380 50L350 90L380 70M515 10L560 40L600 20L640 45M560 60L640 15M450 20L480 40M325 110L345 130M600 50L660 30M150 340L190 320M215 350L245 355" />
        <path d="M160 345L180 330M210 345L248 358L215 375" stroke="#f0e875" strokeWidth="8" />
      </g>
      <g transform={at("B")} fill="none" stroke="#c6df9f" strokeWidth="6">
        <path d="M545 770L590 790L570 820M600 790L650 810L620 835M560 830L610 805M660 790L690 820M520 800L540 830" />
      </g>
      <g transform={at("D")} fill="none" stroke="#f8f28a" strokeWidth="3">
        <path d="M82 525H130V622H195V742H115V690H82ZM272 487V475L355 457H368M115 710L195 695" />
      </g>
      <g transform={at("A")} fill="none" stroke="#9be8c5" strokeWidth="4"><circle cx="53" cy="179" r="12" /><circle cx="66" cy="628" r="13" /></g>
      <g transform={at("D")} fill="none" stroke="#9be8c5" strokeWidth="4"><rect x="112" y="637" width="25" height="50" rx="12" /></g>
      <g transform={at("F")} fill="none" stroke="#88e0be" strokeWidth="4"><path d="M662 360v-25q18-22 38 0v25zM140 575q0-20 30-20t30 20t-30 20t-30-20z" /></g>
      <Trees t="B" x={790} y={92} n={1} color="#7aa56f" />
      <Trees t="E" x={98} y={292} n={2} color="#a09a5a" />
      <Trees t="F" x={812} y={82} n={2} color="#86b07a" />
      <g transform={at("C")} fill="#93b692"><path d="M660 795v-22q6-14 12 0v22h10v5h-32v-5zM648 650h35v6h-35z" /></g>
      <g transform={at("E")} fill="none" stroke="#c2a364" strokeWidth="5" strokeDasharray="12 14">
        <path d="M55 285L90 240L130 270L160 250M895 670l8-20M915 650l-5 25M925 640v20M898 700h10M895 735l15-8M915 748h15M900 780l12 10M925 780v15M905 815l14-6" />
      </g>

      <Strokes items={MINOR} color="#c8c8c8" w="9.5" />
      <Strokes items={MEDIUM} color="#bdbdbd" w="15" />
      <Strokes items={MINOR} color="#fff" w="6.5" />
      <Strokes items={MEDIUM} color="#fff" w="11.5" />
      <Strokes items={BORDERS} color="#b79ab8" w="5" dash="14 7 5 7" />
      <Strokes items={[["C", "M0 110L30 160L90 163L130 185L160 225L340 275L480 298L600 318L720 345L850 372L909 400M160 250L230 290L330 320L480 340L600 350L700 382L820 425L909 452"]]} color="#8fcb9a" w="8" />
      <Strokes items={DOTS} color="#4c53ee" w="5.5" dash="6 9" />
      <Strokes items={YELLOW} color="#d5d89c" w="26" />
      <Strokes items={YELLOW} color="#f6fabb" w="20" />
      <Strokes items={ORANGE} color="#d9a75f" w="26" />
      <Strokes items={ORANGE} color="#fcd6a4" w="19" />
      <Strokes items={RED} color="#e68270" w="29" />
      <Strokes items={RED} color="#f9b29c" w="22" />
      <g transform={at("C")}>
        <path d="M32 10V110L-8 270L-15 304H28L42 250L58 130V10Z" fill="#f9b29c" />
        <path d="M26 160L-10 275M52 165L38 250" stroke="#554b48" strokeWidth="3" />
        <path d="M24 160h30v28h-32z" fill="#b9a069" />
      </g>
      <Strokes items={[["C", "M255 420L310 510L330 545L410 570M270 425L300 480L325 530V590"]]} color="#a6a6a6" w="6" />
      <Strokes items={RAIL} color="#707070" w="15" />
      <Strokes items={RAIL} color="#dcdcdc" w="6" dash="22 26" />

      <g transform={at("E")}>
        <rect x="196" y="439" width="175" height="131" rx="8" fill="#f4d4cd" stroke="#d8a99d" strokeWidth="4" />
      </g>
      <g fontFamily='"Noto Sans", sans-serif' fontWeight="500" fontSize="42" fill="#7d4b44" stroke="#7d4b44" strokeWidth="1" transform={at("E")}>
        <text x="225" y="496" textLength="118" lengthAdjust="spacingAndGlyphs">US 40</text>
        <text x="225" y="549" textLength="118" lengthAdjust="spacingAndGlyphs">US 59</text>
      </g>
      <g fontFamily='"Noto Sans", "Open Sans", sans-serif' paintOrder="stroke" stroke="#fff" strokeOpacity=".65" strokeWidth="7" strokeLinejoin="round">
        {LABELS.map(([t, x, y, s, size, rot, fill, italic, w], i) => (
          <text key={i} transform={`${at(t)} translate(${x} ${y}) rotate(${rot})`} fontSize={size} fill={fill}
            fontStyle={italic ? "italic" : "normal"} fontWeight="400" textLength={w} lengthAdjust="spacingAndGlyphs"
            strokeOpacity={rot === -90 || size === 37 ? 0 : 0.65}>{s}</text>
        ))}
        <text transform={at("A")} fontSize="37" fill="#333" strokeOpacity="0"><textPath href="#kasold">Kasold Drive</textPath></text>
      </g>

      <path d="M450 269L459 248Q466 238 475 241Q480 248 472 254Z" fill="#000" opacity=".34" filter="url(#soft)" />
      <g transform="translate(431 210)">
        <path d="M18.5 .7C8.5.7.8 8.5.8 18.3C.8 24 3 28 6 33L18.5 59.5L31 33C34 28 36.2 24 36.2 18.3C36.2 8.5 28.5.7 18.5.7Z" fill="url(#pin)" stroke="#2b72ab" strokeWidth="1.4" />
        <path d="M18.5 2.5C9.5 2.5 2.6 9.5 2.6 18.3C2.6 23.5 5 27.5 7.7 32.5L18.5 55.5L29.3 32.5C32 27.5 34.4 23.5 34.4 18.3C34.4 9.5 27.5 2.5 18.5 2.5Z" fill="none" stroke="#fff" strokeOpacity=".16" strokeWidth="1.6" />
        <circle cx="18.5" cy="18.7" r="6.4" fill="#fff" stroke="#2e73ab" strokeWidth="1" />
      </g>
    </svg>
  );
}

const DETAILS = [
  { title: "Cause", lines: ["Local Outreach"] },
  { title: "Date", lines: ["2024-04-14"] },
  { title: "Time", lines: ["13:30"] },
  { title: "Address", lines: ["1536 W 15th St", "Lawrence, KS 66045"] },
];

export default function App() {
  return (
    <Page>
      <Global />
      <TopBar />
      <Columns>
        <Sidebar>
          {DETAILS.map(({ title, lines }) => (
            <Card key={title} $lines={lines.length}>
              <CardTitle>{title}</CardTitle>
              <CardBody>{lines.map((l) => <div key={l}>{l}</div>)}</CardBody>
            </Card>
          ))}
        </Sidebar>
        <Main>
          <Heading>Outreach Event</Heading>
          <MapFrame>
            <StreetMap />
            <ZoomControl>
              <ZoomButton $first>+</ZoomButton>
              <ZoomButton>−</ZoomButton>
            </ZoomControl>
            <Attribution>
              <Flag />
              <MapLink>Leaflet</MapLink> | © <MapLink>OpenStreetMap</MapLink> contributors
            </Attribution>
          </MapFrame>
          <Description>
            Engineering student event for community outreach. We will be meeting in front of LEEP 2 and the the event will last 3 hours.
          </Description>
        </Main>
      </Columns>
    </Page>
  );
}
